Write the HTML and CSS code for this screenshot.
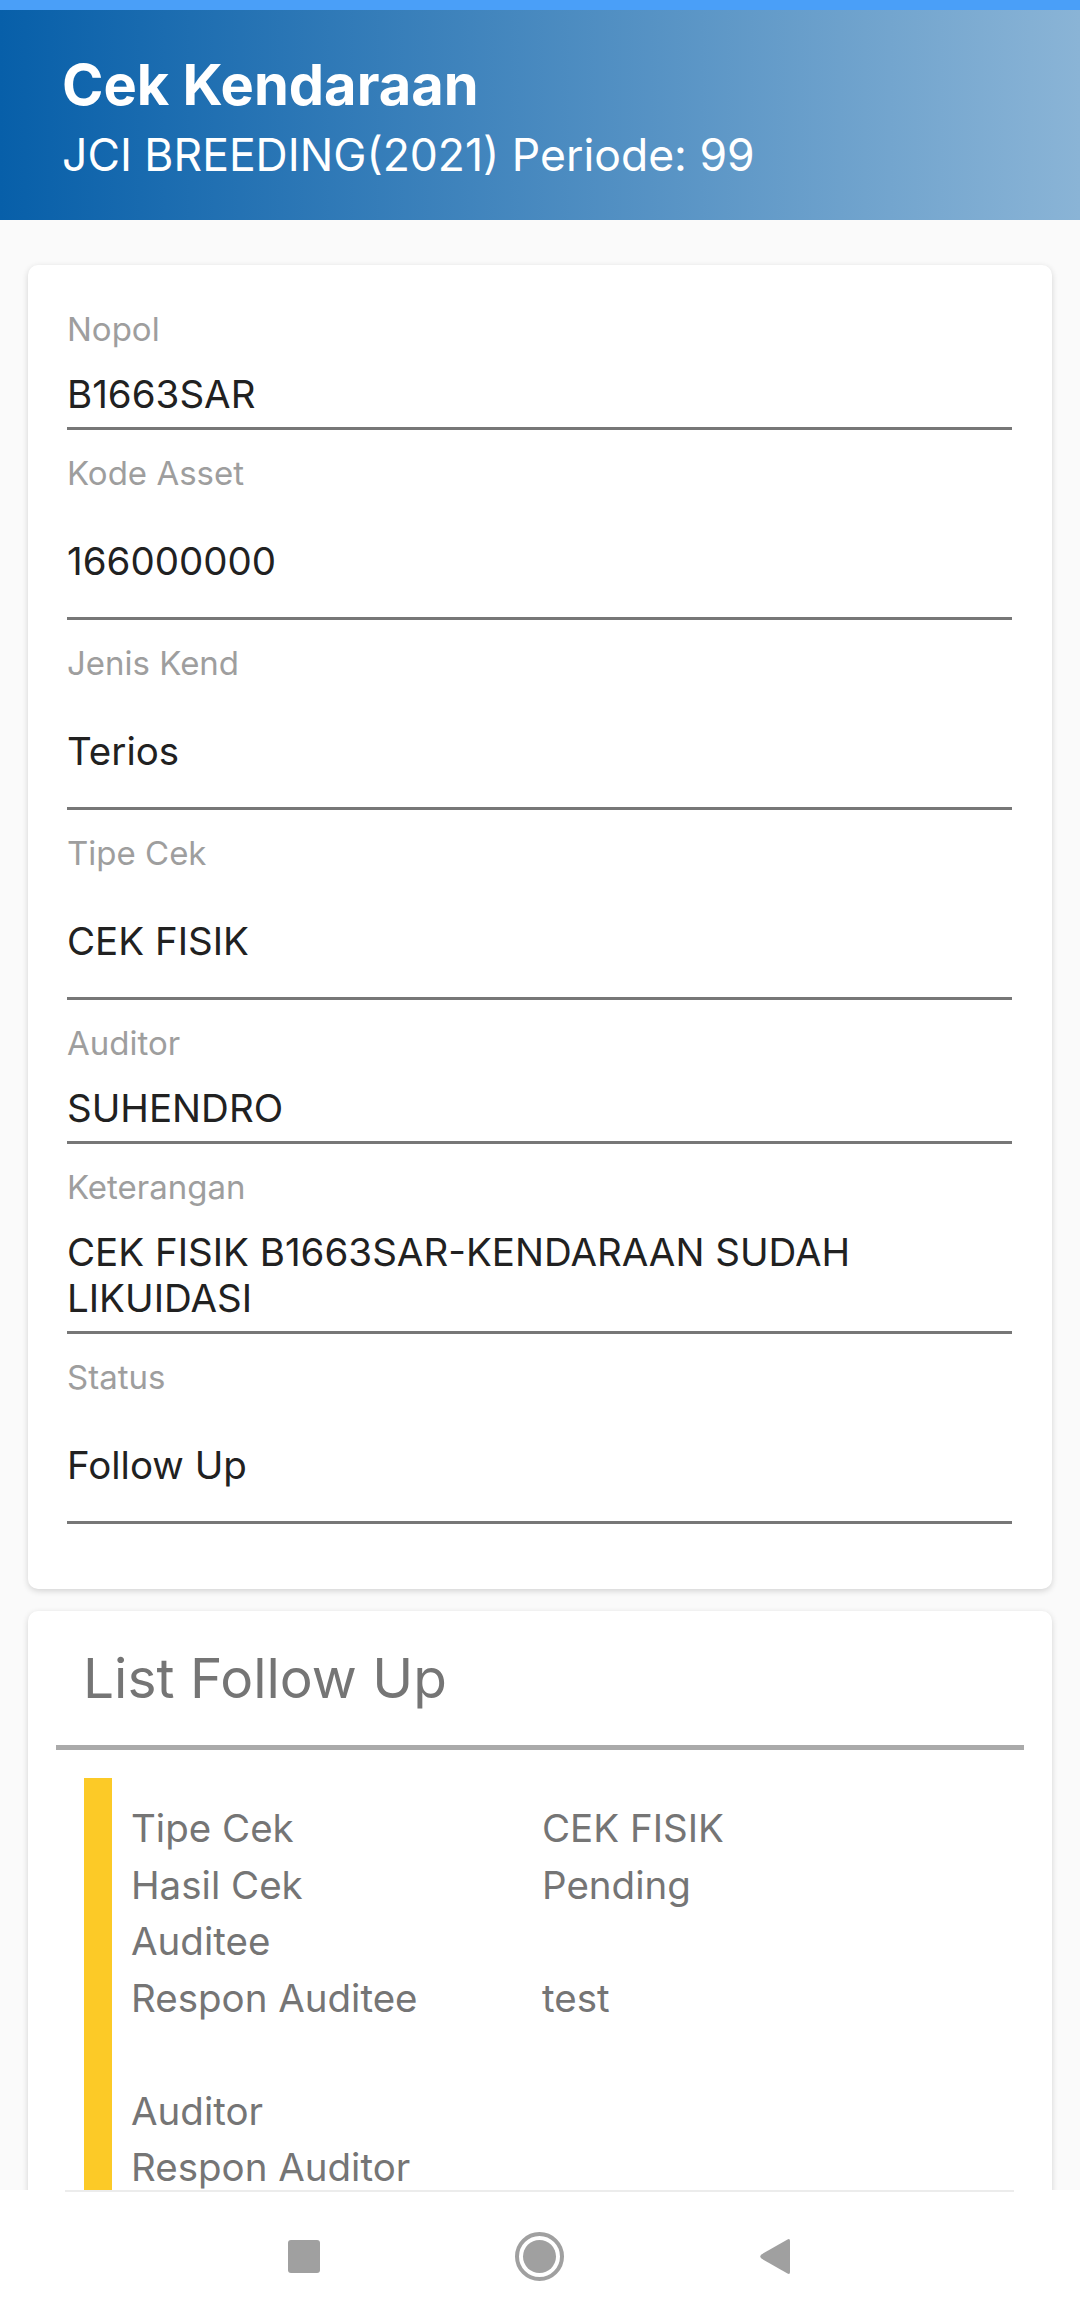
FILE: index.html
```html
<!DOCTYPE html>
<html lang="id">
<head>
    <meta charset="UTF-8">
    <meta name="viewport" content="width=device-width, initial-scale=1.0">
    <title>Cek Kendaraan</title>
    <link rel="stylesheet" href="styles.css">
</head>
<body>

    <div class="statusbar"></div>

    <div class="header">
        <h1>Cek Kendaraan</h1>
        <h2>JCI BREEDING(2021) Periode: 99</h2>
    </div>

    <div class="content">
        <div class="card form">
            <div class="field">
                <div class="label">Nopol</div>
                <div class="value">B1663SAR</div>
            </div>
            <div class="field tall">
                <div class="label">Kode Asset</div>
                <div class="value">166000000</div>
            </div>
            <div class="field tall">
                <div class="label">Jenis Kend</div>
                <div class="value">Terios</div>
            </div>
            <div class="field tall">
                <div class="label">Tipe Cek</div>
                <div class="value">CEK FISIK</div>
            </div>
            <div class="field">
                <div class="label">Auditor</div>
                <div class="value">SUHENDRO</div>
            </div>
            <div class="field">
                <div class="label">Keterangan</div>
                <div class="value">CEK FISIK B1663SAR-KENDARAAN SUDAH LIKUIDASI</div>
            </div>
            <div class="field tall">
                <div class="label">Status</div>
                <div class="value">Follow Up</div>
            </div>
        </div>

        <div class="card list">
            <div class="list-title">List Follow Up</div>
            <div class="list-sep"></div>
            <div class="followup">
                <div class="row"><span>Tipe Cek</span><span>CEK FISIK</span></div>
                <div class="row"><span>Hasil Cek</span><span>Pending</span></div>
                <div class="row"><span>Auditee</span><span></span></div>
                <div class="row"><span>Respon Auditee</span><span>test<br>&nbsp;</span></div>
                <div class="row"><span>Auditor</span><span></span></div>
                <div class="row"><span>Respon Auditor</span><span></span></div>
            </div>
        </div>
    </div>

    <div class="navbar">
        <div class="nav-line"></div>
        <div class="nav-buttons">
            <div class="nav-recent"></div>
            <svg class="nav-home" width="49" height="49" viewBox="0 0 49 49">
                <circle cx="24.5" cy="24.5" r="22.5" fill="none" stroke="#a0a0a0" stroke-width="4"/>
                <circle cx="24.5" cy="24.5" r="16.5" fill="#a0a0a0"/>
            </svg>
            <svg class="nav-back" width="33" height="37" viewBox="0 0 33 37">
                <path d="M31 3 L31 34 Q31 37 28.5 35.6 L2.5 20.6 Q0 18.5 2.5 16.4 L28.5 1.4 Q31 0 31 3 Z" fill="#a0a0a0"/>
            </svg>
        </div>
    </div>

</body>
</html>
```

FILE: styles.css
```css
body {
    margin: 0;
    width: 1080px;
    height: 2320px;
    overflow: hidden;
    display: flex;
    flex-direction: column;
    font-family: Inter, "Noto Sans", sans-serif;
    background: #fafafa;
}
.statusbar {
    height: 10px;
    background: #4a9ff8;
}
.header {
    height: 210px;
    box-sizing: border-box;
    padding: 41px 0 0 62px;
    background: linear-gradient(90deg, #075fa9, #8ab4d6);
    color: white;
}
.header h1 {
    margin: 0;
    font-size: 56px;
    line-height: 68px;
    font-weight: 700;
}
.header h2 {
    margin: 10px 0 0;
    font-size: 44.5px;
    line-height: 53px;
    font-weight: 400;
}
.content {
    flex: 1;
    overflow: hidden;
    padding: 45px 28px 0;
}
.card {
    background: white;
    border-radius: 10px;
    box-shadow: 0 2px 6px rgba(0, 0, 0, 0.16);
}
.form {
    padding: 21px 40px 65px 39px;
}
.field {
    padding-top: 23px;
    border-bottom: 3px solid #777;
}
.label {
    font-size: 33px;
    line-height: 40px;
    color: #9e9e9e;
}
.value {
    margin-top: 22px;
    padding-bottom: 10px;
    font-size: 38.5px;
    line-height: 46px;
    color: #212121;
}
.field.tall .value {
    margin-top: 45px;
    padding-bottom: 33px;
}
.list {
    margin-top: 22px;
    padding: 33px 28px 40px;
    border-radius: 10px 10px 0 0;
}
.list-title {
    padding-left: 27px;
    font-size: 55px;
    line-height: 68px;
    font-weight: 400;
    color: #757575;
}
.list-sep {
    height: 5px;
    margin-top: 33px;
    background: #aaa;
}
.followup {
    margin: 28px 0 0 28px;
    padding: 22px 0 0 19px;
    border-left: 28px solid #fcca27;
}
.row {
    display: grid;
    grid-template-columns: 411px 1fr;
    font-size: 38.5px;
    line-height: 56.5px;
    color: #757575;
}
.navbar {
    height: 130px;
    background: white;
}
.nav-line {
    height: 2px;
    margin: 0 66px 0 65px;
    background: #ececec;
}
.nav-buttons {
    display: flex;
    justify-content: center;
    align-items: center;
    gap: 195px;
    height: 128px;
}
.nav-recent {
    width: 32px;
    height: 33px;
    border-radius: 3px;
    background: #a0a0a0;
}
```
